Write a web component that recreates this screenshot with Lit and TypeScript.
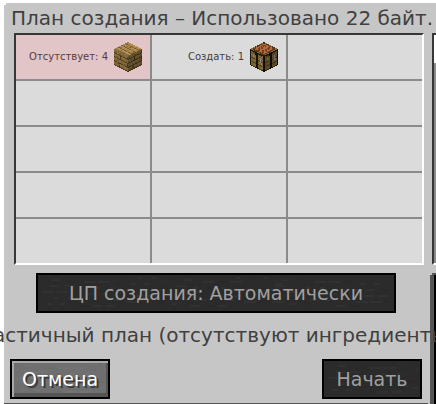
import { LitElement, html, svg, css } from "lit";
import { customElement, property } from "lit/decorators.js";

type Palette = Record<string, string>;

const PLANKS = [
  "mlllmmllllmmlllm",
  "lmmlllmnlllmmlln",
  "mnmmllmmmnmlmmmd",
  "dddnnddddndddndd",
  "llmmllldmllllmml",
  "mllmnmldllmnllmm",
  "mmnmmmmdmmmmmnmm",
  "ddnddddddddnnddd",
  "mlllmlllmlllmmld",
  "llmmmnllmmmllnmd",
  "mmnmlmmmnmmmmmmd",
  "ddddndddddnddddd",
  "mmllldmllmmlllmm",
  "lmnllndlllmnllml",
  "mmmmmmdmmnmmmmmm",
  "ddnnddddddddnddd",
];
const TABLE_TOP = [
  "klllddlllldddllk",
  "ldddddddddddddol",
  "ldoorooorooorodl",
  "ldorrroorroorrdl",
  "ddrrooroorrooodl",
  "ldoorroorroorrdd",
  "ldorooorooorordl",
  "ddoorrooorrooodl",
  "ldrroorroorrordd",
  "ldoorooorooorodl",
  "ddorrroorroorodl",
  "ldooorroorroordl",
  "ldrooorroorroodd",
  "ldoorrooorooordl",
  "lodddddddddddddl",
  "kllldddlllldddlk",
];
const TABLE_SIDE = [
  "kkkkkkkkkkkkkkkk",
  "klddddkkkddlddlk",
  "kmmmmnkkkmmmmmmk",
  "kmnmmmmkkmnmmmmk",
  "klmmgmmkkmmmgmmk",
  "kmmggmlkkmmggnmk",
  "kmngmmmkklmmgmmk",
  "kddgddnkkddngddk",
  "kmmgmmmkkmlmggmk",
  "kmnmmlmkkmmmmgmk",
  "kmmmmmnkkmmnmmmk",
  "kndddddkkdddddnk",
  "kmmmmlmkkmmmnmmk",
  "kmnmmmmkkmnmmmlk",
  "kmmlmmmkkmmmmmmk",
  "kkddddkkkkddddkk",
];

const WOOD_TOP: Palette = { l: "#b8945a", m: "#a6854c", n: "#94733e", d: "#7a5f34" };
const WOOD_LEFT: Palette = { l: "#8b7140", m: "#7c6438", n: "#6c562e", d: "#4b3a1e", k: "#17120a", g: "#85878a" };
const WOOD_RIGHT: Palette = { l: "#695530", m: "#5c4a28", n: "#504022", d: "#382b17", k: "#100c06", g: "#6c6c6e" };
const BENCH_TOP: Palette = { l: "#8a7042", d: "#51361e", k: "#33200f", o: "#b46b3e", r: "#733f22" };

const clamp = (n: number) => Math.max(0, Math.min(15, Math.floor(n)));

/* Samples the three visible faces of a cube, one texel for each pixel. */
function* cube(bench: boolean) {
  const top = bench ? TABLE_TOP : PLANKS;
  const side = bench ? TABLE_SIDE : PLANKS;
  const roof = bench ? BENCH_TOP : WOOD_TOP;
  for (let y = 0; y < 30; y++) {
    for (let x = 0; x < 28; x++) {
      const a = (x + 0.5 - 14) / 14;
      const b = (y + 0.5) / 7;
      const u = (b + a) / 2;
      const v = (b - a) / 2;
      if (u < 0 || v < 0) continue;
      if (u <= 1 && v <= 1) {
        yield { x, y, fill: roof[top[clamp(v * 16)][clamp(u * 16)]] };
        continue;
      }
      const left = x < 14;
      const ridge = left ? 7 + (x + 0.5) / 2 : 21 - (x + 0.5) / 2;
      const row = y + 0.5 - ridge;
      if (row > 16) continue;
      const column = clamp(((left ? x : x - 14) + 0.5) * (16 / 14));
      yield { x, y, fill: (left ? WOOD_LEFT : WOOD_RIGHT)[side[clamp(row)][column]] };
    }
  }
}

@customElement("block-icon")
export class BlockIcon extends LitElement {
  static styles = css`
    :host { display: block; width: 28px; height: 30px; flex: none; }
    .icon { display: block; }
  `;
  @property() kind = "planks";
  render() {
    return html`<svg class="icon" width="28" height="30" viewBox="0 0 28 30" shape-rendering="crispEdges" aria-hidden="true">
      ${[...cube(this.kind === "bench")].map((p) => svg`<rect x=${p.x} y=${p.y} width="1" height="1" fill=${p.fill}></rect>`)}
    </svg>`;
  }
}

@customElement("stone-button")
export class StoneButton extends LitElement {
  static styles = css`
    :host { display: block; }
    .button {
      position: relative; display: block; width: 100%; height: 40px; padding: 0;
      border: 2px solid #000; border-radius: 0; background: #6f6f6f; color: #fff;
      font: 19px/36px "DejaVu Sans", sans-serif; text-shadow: 2px 2px #383838;
      overflow: hidden; white-space: nowrap;
    }
    .button:enabled { box-shadow: inset 2px 2px #a8a8a8, inset -2px -4px #555; }
    .button:disabled { background: #2b2b2b; color: #a0a0a0; text-shadow: none; }
    .grain { position: absolute; left: 2px; top: 2px; width: calc(100% - 4px); height: 30px; }
    .label { position: relative; }
  `;
  @property() label = "";
  @property({ type: Boolean }) disabled = false;
  render() {
    const specks = Array.from({ length: 110 }, (_, i) => ({
      x: ((i * 37) % 178) * 2,
      y: ((i * 11 + (i >> 3) * 5) % 15) * 2,
      w: 4 + ((i * 7) % 5) * 2,
      light: i % 3 !== 0,
    }));
    return html`<button class="button" ?disabled=${this.disabled}>
      <svg class="grain" aria-hidden="true">
        ${specks.map((s) => svg`<rect x=${s.x} y=${s.y} width=${s.w} height="2" fill=${s.light ? "#fff" : "#000"} opacity=".03"></rect>`)}
      </svg>
      <span class="label">${this.label}</span>
    </button>`;
  }
}

interface Entry { text: string; icon: string; missing: boolean }

@customElement("app-root")
export class AppRoot extends LitElement {
  static styles = css`
    :host {
      display: block; box-sizing: border-box; min-height: 100vh; padding: 3px 0 0 4px;
      overflow: hidden; background: #fff; color: #404040;
      font: 20px/24px "DejaVu Sans", sans-serif;
    }
    .window { position: relative; display: flex; min-height: calc(100vh - 3px); background: #c6c6c6; }
    .window::before { content: ""; position: absolute; left: 0; top: 0; width: 2px; height: 2px; background: #fff; }
    .main {
      position: relative; z-index: 1; flex: 1; min-width: 0; display: flex; flex-direction: column;
      box-sizing: border-box; padding: 3px 4px 4px 6px; border-bottom: 1px solid #555;
    }
    .title { margin: 0 0 3px 1px; font-size: 20px; font-weight: 400; white-space: nowrap; }
    .plan {
      display: grid; grid-template-columns: repeat(3, 1fr); grid-auto-rows: 44px; gap: 2px;
      margin: 0 0 0 4px; padding: 0; list-style: none; background: #8b8b8b;
      border: 2px solid; border-color: #373737 #fff #fff #373737;
    }
    .cell {
      display: flex; align-items: center; justify-content: flex-end; gap: 6px; padding-right: 8px;
      background: #dbdbdb; font-size: 10px; white-space: nowrap;
    }
    .missing { background: #e2c5c6; color: #593c3d; }
    .cpu { margin: 8px 28px 0 26px; }
    .status { display: flex; justify-content: center; margin: 10px 0 12px; white-space: nowrap; }
    .actions { display: flex; justify-content: space-between; padding-right: 2px; }
    .action { width: 100px; }
    .rail { flex: none; width: 8px; display: flex; flex-direction: column; }
    .track {
      height: 228px; margin: 30px 0 8px 4px; background: linear-gradient(#fff 28px, #8b8b8b 28px);
      border: solid; border-width: 2px 0 2px 2px; border-color: #373737 #fff #fff #373737;
    }
    .edge { position: relative; flex: 1; margin-left: 2px; background: #000; border: solid #555; border-width: 2px 0 0 4px; }
    .edge::before { content: ""; position: absolute; left: -4px; top: -2px; width: 2px; height: 2px; background: #c6c6c6; }
  `;

  private entries: (Entry | null)[] = [
    { text: "Отсутствует: 4", icon: "planks", missing: true },
    { text: "Создать: 1", icon: "bench", missing: false },
    ...Array.from({ length: 13 }, () => null),
  ];

  render() {
    return html`<div class="window">
      <main class="main">
        <h1 class="title">План создания – Использовано 22 байт.</h1>
        <ul class="plan">
          ${this.entries.map((e) => html`<li class="cell ${e?.missing ? "missing" : ""}">
            ${e ? html`<span>${e.text}</span><block-icon kind=${e.icon}></block-icon>` : null}
          </li>`)}
        </ul>
        <stone-button class="cpu" label="ЦП создания: Автоматически" disabled></stone-button>
        <div class="status"><span>Частичный план (отсутствуют ингредиенты)</span></div>
        <div class="actions">
          <stone-button class="action" label="Отмена"></stone-button>
          <stone-button class="action" label="Начать" disabled></stone-button>
        </div>
      </main>
      <div class="rail"><div class="track"></div><div class="edge"></div></div>
    </div>`;
  }
}
